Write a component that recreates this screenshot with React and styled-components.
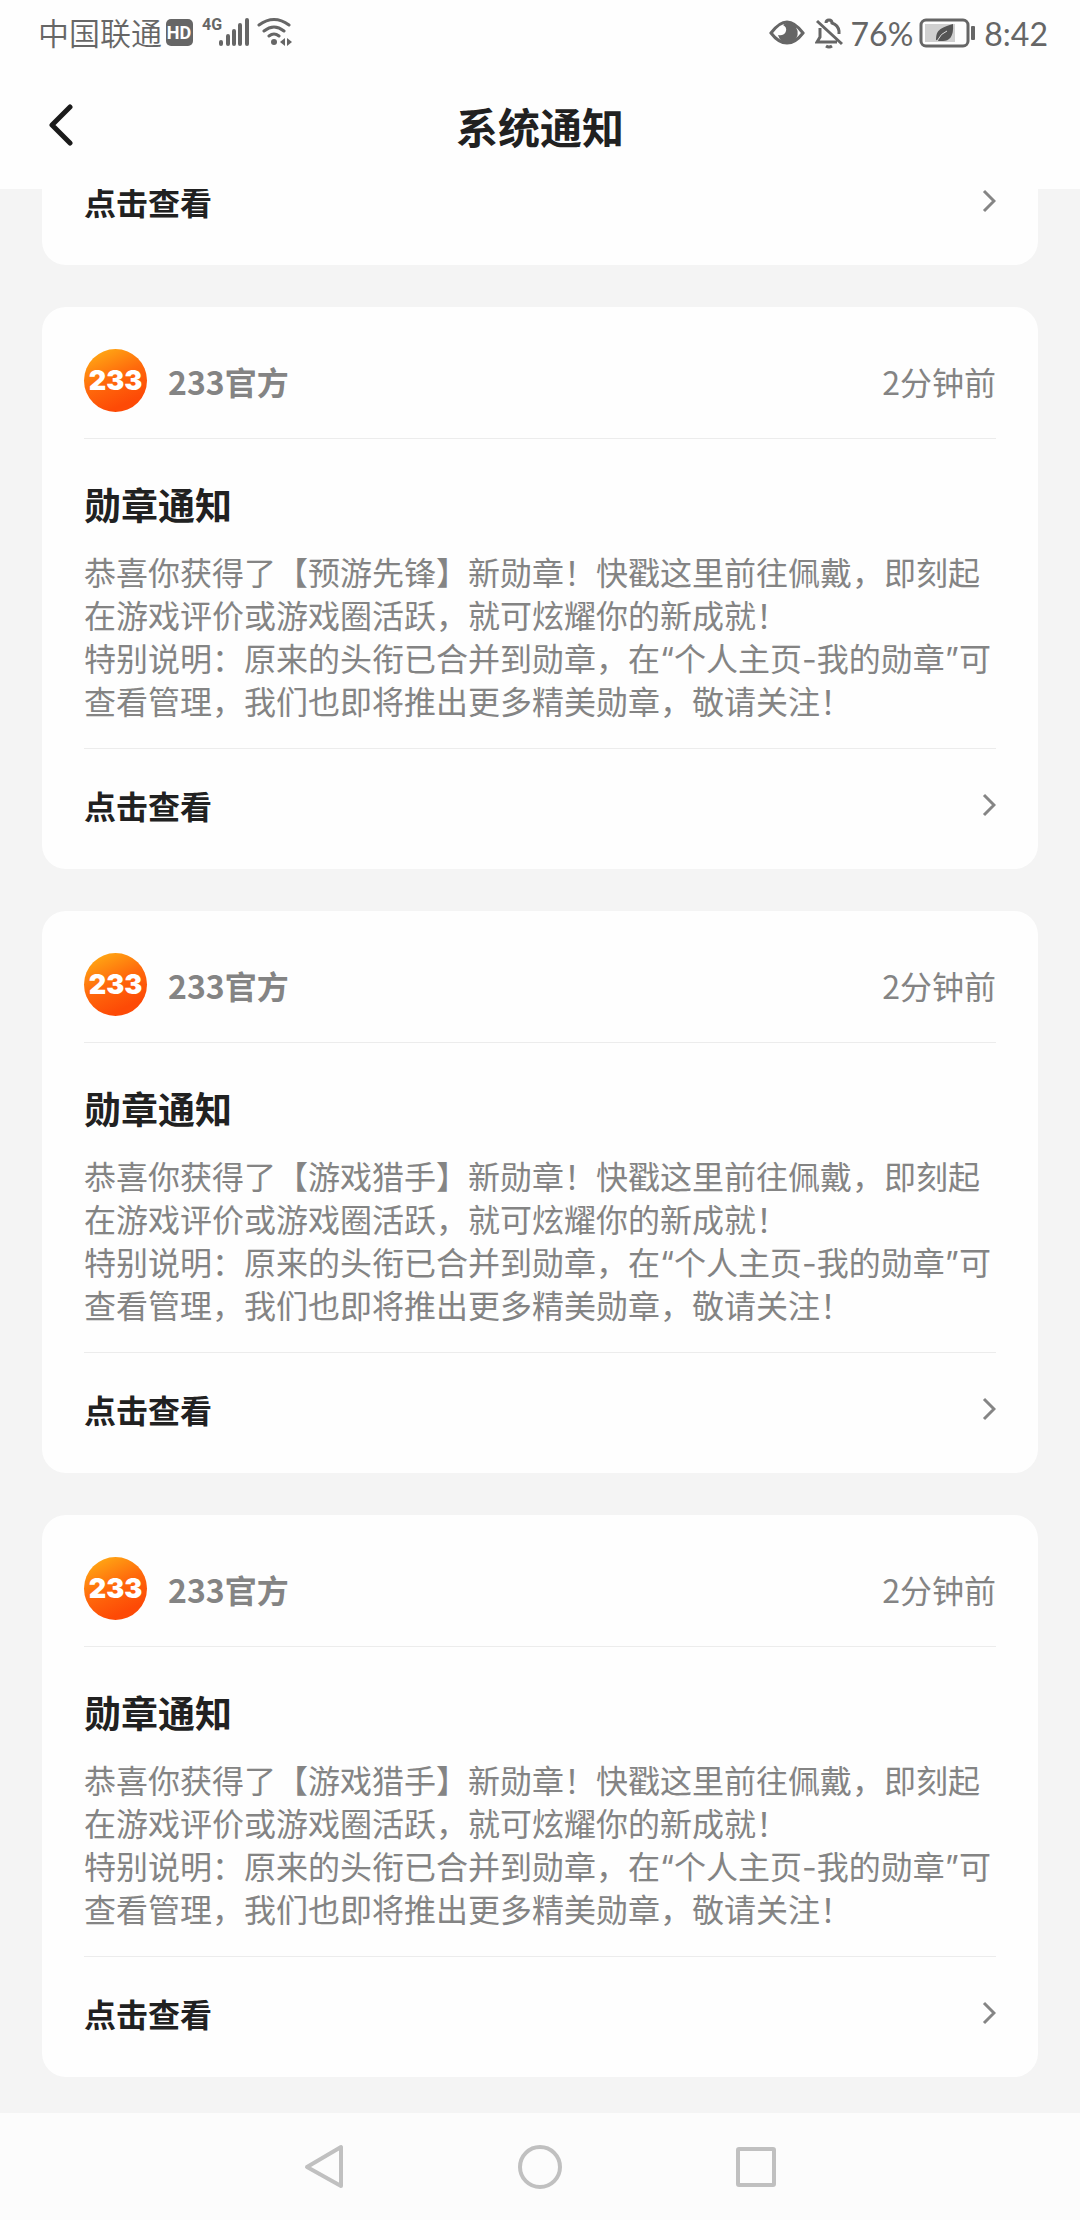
import styled, { createGlobalStyle } from 'styled-components'

const GlobalStyle = createGlobalStyle`
   * {
      box-sizing: border-box;
   }

   body {
      margin: 0;
      background-color: #f4f4f4;
      color: #212121;
      font-family: 'Noto Sans CJK SC', sans-serif;
   }

   button {
      padding: 0;
      border: 0;
      background: none;
      cursor: pointer;
   }

   svg {
      display: block;
      flex-shrink: 0;
   }
`

const Page = styled.div`
   display: flex;
   flex-direction: column;
   min-height: 100vh;
`

const Top = styled.header`
   position: sticky;
   top: 0;
   z-index: 1;
   background-color: #fefefe;
`

const StatusBar = styled.div`
   display: flex;
   justify-content: space-between;
   align-items: center;
   height: 66px;
   padding: 0 32px 0 38px;
   color: #666;
`

const StatusGroup = styled.div`
   display: flex;
   align-items: center;
`

const Carrier = styled.span`
   padding-bottom: 4px;
   margin-right: 4px;
   font-size: 31px;
   font-weight: 350;
`

const Digits = styled.span`
   margin: 0 ${(props) => (props.$clock ? '0' : '6px')} 0 8px;
   font-family: Lato, 'Noto Sans CJK SC', sans-serif;
   font-size: 32px;
   font-weight: 400;
`

const TitleBar = styled.div`
   display: grid;
   grid-template-columns: 96px 1fr 96px;
   align-items: center;
   height: 123px;
   padding-bottom: 4px;
`

const BackButton = styled.button`
   display: flex;
   align-items: center;
   height: 96px;
   padding-left: 46px;
`

const PageTitle = styled.h1`
   margin: 0;
   font-size: 42px;
   line-height: 60px;
   text-align: center;
`

const List = styled.main`
   display: flex;
   flex-direction: column;
   gap: 42px;
   margin-top: -44px; /* 첫 번째 카드는 헤더 밑으로 스크롤된 상태 */
   padding: 0 42px 36px;
`

const Card = styled.article`
   padding: 0 42px;
   border-radius: 24px;
   background-color: #fefefe;
`

const Sender = styled.div`
   display: flex;
   align-items: center;
   gap: 21px;
   padding: 42px 0 26px;
   color: #848484;
   font-size: 32px;
   line-height: 48px;
   border-bottom: 1px solid #ececec;
`

const Avatar = styled.div`
   width: 63px;
   height: 63px;
   border-radius: 50%;
   background: linear-gradient(155deg, #ffa914 8%, #ff6a0c 46%, #fd4a06 80%);
   color: white;
   font-family: Inter, sans-serif;
   font-size: 27px;
   font-weight: 900;
   line-height: 63px;
   text-align: center;
`

const SenderName = styled.strong`
   flex: 1;
`

const Content = styled.div`
   padding: 38px 0 24px;
   border-bottom: 1px solid #ececec;
`

const NoticeTitle = styled.h2`
   margin: 0 0 21px;
   font-size: 37px;
   line-height: 54px;
`

const NoticeText = styled.p`
   margin: 0;
   color: #848484;
   font-family: Inter, 'Noto Sans CJK SC', sans-serif;
   font-size: 32px;
   line-height: 43px;
   white-space: pre-line;
`

const DetailLink = styled.a`
   display: flex;
   justify-content: space-between;
   align-items: center;
   height: 120px;
   padding-bottom: 8px;
   color: #212121;
   font-size: 32px;
   font-weight: 700;
   text-decoration: none;
`

const NavBar = styled.nav`
   display: flex;
   justify-content: center;
   height: 107px;
   margin-top: auto;
   background-color: #fcfcfc;
`

const NavButton = styled.button`
   display: flex;
   justify-content: center;
   align-items: center;
   width: 20%;
`

const notices = [
   { id: 1, medal: '预游先锋' },
   { id: 2, medal: '游戏猎手' },
   { id: 3, medal: '游戏猎手' },
]

const getMessage = (medal) =>
   `恭喜你获得了【${medal}】新勋章！快戳这里前往佩戴，即刻起在游戏评价或游戏圈活跃，就可炫耀你的新成就！
特别说明：原来的头衔已合并到勋章，在“个人主页-我的勋章”可查看管理，我们也即将推出更多精美勋章，敬请关注！`

const SignalIcons = () => (
   <svg width="128" height="36" viewBox="166 15 128 36" fill="#666">
      <rect x="166" y="19" width="27" height="27" rx="5" />
      <text x="179" y="39" fill="#fff" textAnchor="middle" fontFamily="Roboto, sans-serif" fontWeight="700" fontSize="18">
         HD
      </text>
      <text x="202" y="30" fontFamily="'Liberation Sans Narrow', Roboto, sans-serif" fontWeight="700" fontSize="16">
         4G
      </text>
      <path d="M221 42v2M228 36v8M234 31v13M240 25v19M247 20v24" stroke="#666" strokeWidth="4" strokeLinecap="round" />
      <path
         d="M259 25Q274 14 289 25M264 31Q274 23 284 31M269 36Q274 32 279 36"
         fill="none"
         stroke="#666"
         strokeWidth="3"
         strokeLinecap="round"
      />
      <circle cx="274" cy="42" r="3" />
      <path d="M285 38v8l-5-4zM287 38v8l5-4z" />
   </svg>
)

const EyeIcon = () => (
   <svg width="36" height="26" viewBox="0 0 36 26" fill="none">
      <path d="M2 13C8 5 13 2 18 2s10 3 16 11c-6 8-11 10-16 10S8 21 2 13z" stroke="#666" strokeWidth="3" />
      <path d="M17 3a10 10 0 1 1-8 12c3 1 7 0 8-4q1-4-3-6z" fill="#666" />
   </svg>
)

const BellOffIcon = () => (
   <svg width="28" height="32" viewBox="0 0 28 32" fill="none" stroke="#666" strokeWidth="3">
      <path d="M2 4l25 23M5 11v9l-3 5h20M11 6q0-3 3-3t3 3q6 2 7 8v3" />
      <path d="M11 29q3 2 6 0" />
   </svg>
)

const BatteryIcon = () => (
   <svg width="57" height="30" viewBox="0 0 57 30">
      <rect x="2" y="2" width="47" height="26" rx="5" fill="none" stroke="#666" strokeWidth="3" />
      <rect x="6" y="6" width="30" height="18" fill="#d0d0d0" />
      <path d="M34 6c1 13-4 17-10 17-3 0-5 0-7-1 0-9 3-12 17-16z" fill="#555" />
      <path d="M18 23q4-8 10-10" fill="none" stroke="#ddd" strokeWidth="1" />
      <rect x="52" y="8" width="4" height="14" rx="1" fill="#666" />
   </svg>
)

const ChevronIcon = () => (
   <svg width="15" height="24" viewBox="0 0 15 24" fill="none" stroke="#858585" strokeWidth="3">
      <path d="M3 2L13 12L3 22" />
   </svg>
)

function DetailRow() {
   return (
      <DetailLink href="#detail">
         <span>点击查看</span>
         <ChevronIcon />
      </DetailLink>
   )
}

function NoticeCard({ medal }) {
   return (
      <Card>
         <Sender>
            <Avatar>233</Avatar>
            <SenderName>233官方</SenderName>
            <time>2分钟前</time>
         </Sender>
         <Content>
            <NoticeTitle>勋章通知</NoticeTitle>
            <NoticeText>{getMessage(medal)}</NoticeText>
         </Content>
         <DetailRow />
      </Card>
   )
}

const StatusIcons = styled.div`
   display: flex;
   align-items: center;
   gap: 10px;
`

function App() {
   return (
      <>
         <GlobalStyle />
         <Page>
            <Top>
               <StatusBar>
                  <StatusGroup>
                     <Carrier>中国联通</Carrier>
                     <SignalIcons />
                  </StatusGroup>
                  <StatusGroup>
                     <StatusIcons>
                        <EyeIcon />
                        <BellOffIcon />
                     </StatusIcons>
                     <Digits>76%</Digits>
                     <BatteryIcon />
                     <Digits $clock>8:42</Digits>
                  </StatusGroup>
               </StatusBar>
               <TitleBar>
                  <BackButton aria-label="返回">
                     <svg width="30" height="44" viewBox="0 0 30 44" fill="none" stroke="#1b1b1b" strokeWidth="5" strokeLinecap="round" strokeLinejoin="round">
                        <path d="M24 3L6 21L24 39" />
                     </svg>
                  </BackButton>
                  <PageTitle>系统通知</PageTitle>
               </TitleBar>
            </Top>
            <List>
               <Card>
                  <DetailRow />
               </Card>
               {notices.map((notice) => (
                  <NoticeCard key={notice.id} medal={notice.medal} />
               ))}
            </List>
            <NavBar>
               <NavButton aria-label="返回">
                  <svg width="44" height="46" viewBox="0 0 44 46" fill="none" stroke="#c0c0c0" strokeWidth="4" strokeLinejoin="round">
                     <path d="M39 3v39L5 23z" />
                  </svg>
               </NavButton>
               <NavButton aria-label="主页">
                  <svg width="44" height="44" viewBox="0 0 44 44" fill="none" stroke="#c0c0c0" strokeWidth="4">
                     <circle cx="22" cy="22" r="20" />
                  </svg>
               </NavButton>
               <NavButton aria-label="最近任务">
                  <svg width="40" height="40" viewBox="0 0 40 40" fill="none" stroke="#c0c0c0" strokeWidth="4">
                     <rect x="2" y="2" width="36" height="36" rx="1" />
                  </svg>
               </NavButton>
            </NavBar>
         </Page>
      </>
   )
}

export default App
